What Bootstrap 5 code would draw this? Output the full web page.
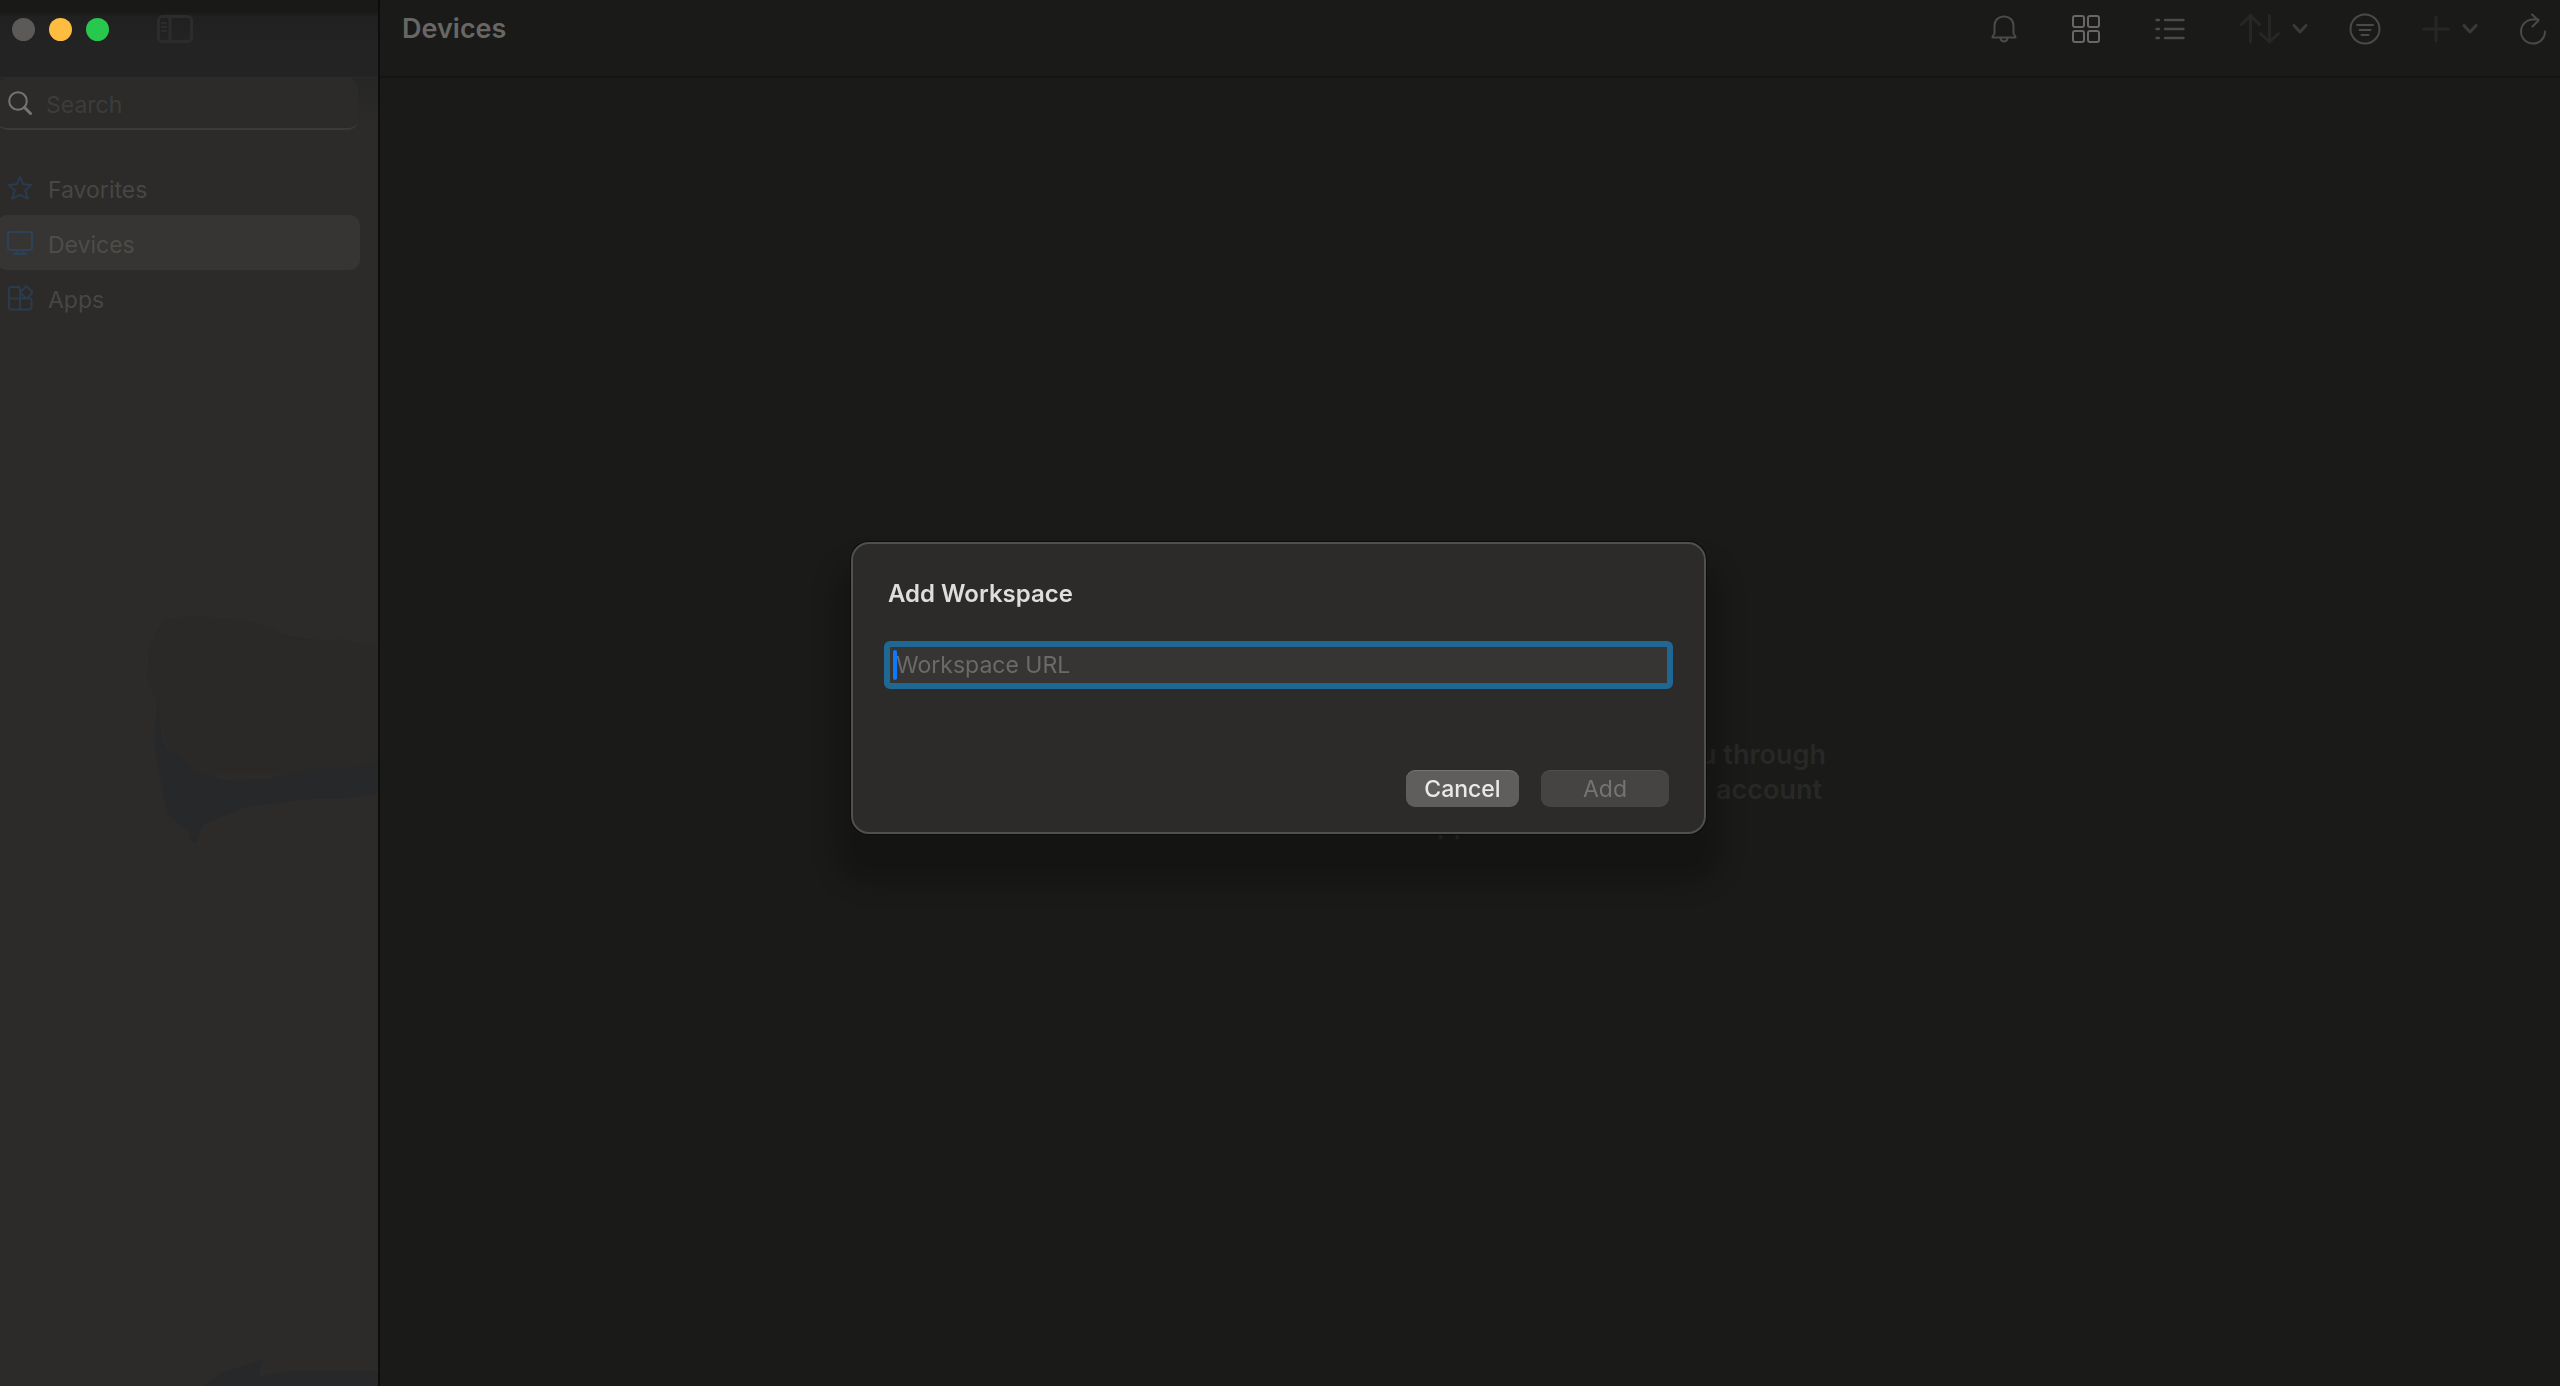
<!DOCTYPE html>
<html lang="en" data-bs-theme="dark">
<head>
<meta charset="utf-8">
<meta name="viewport" content="width=device-width, initial-scale=1">
<title>Devices</title>
<link href="https://cdn.jsdelivr.net/npm/bootstrap@5.3.0/dist/css/bootstrap.min.css" rel="stylesheet">
<style>
  body { font-family: Inter, "Liberation Sans", sans-serif; font-size: 23px; line-height: 32px; background: #1a1a18; color: #4b4a48; }
  svg { display: block; fill: none; stroke: currentColor; stroke-width: 2; stroke-linecap: round; stroke-linejoin: round; flex: none; }
  svg.thick { stroke-width: 3; }
  .side { width: 380px; border-right: 2px solid #0d0d0c; background: #2c2b29; }
  .side-art { left: 0; bottom: 0; height: 100%; width: 378px; stroke: none; }
  .side-top { height: 77px; padding: 0 24px 19px 12px; background: linear-gradient(#191917 0 12px, #202020 16px, #232323 40px); }
  .side-search { background: linear-gradient(#262626, #2c2b29 50px); padding-bottom: 30px; }
  .lights { gap: 14px; }
  .light { width: 23px; height: 23px; border-radius: 50%; border: 0; padding: 0; }
  .light-close { background: #5b5a58; } .light-min { background: #febc40; } .light-max { background: #27c84d; }
  .ico-btn { border: 0; padding: 0; background: none; color: #4b4a48; display: flex; align-items: center; gap: 12px; }
  .ico-btn.faint { color: #272727; }
  .ico-btn.toggle { color: #2c2c2c; }
  .ico-btn.strong { color: #686765; }
  .chev { color: #3b3a39; }
  .tools { gap: 41px; }
  .tools .wide { margin-left: 14px; }
  .search-box { width: 361px; height: 52px; margin: 1px 0 0 -3px; padding-left: 11px; gap: 14px; border-radius: 10px; background: #2c2b29; border-bottom: 2px solid #3b3a39; color: #757472; }
  .search-box input { border: 0; background: none; outline: 0; padding: 3px 0 0; min-width: 0; flex: 1; }
  .search-box input::placeholder { color: #3d3c3c; opacity: 1; }
  .side-link { width: 363px; height: 55px; margin-left: -3px; padding-left: 11px; gap: 16px; border-radius: 10px; color: #474644; text-decoration: none; }
  .side-link span { padding-top: 4px; }
  .side-link svg { color: #2a3b4e; }
  .side-link.active { background: #363533; color: #4d4c4a; }
  .side-link.active svg { color: #2d4158; }
  .top-bar { height: 78px; padding: 0 13px 18px 22px; border-bottom: 2px solid #141412; }
  .top-bar h1 { font-size: 27px; line-height: 32px; font-weight: 600; color: #686765; }
  .notice { width: 712px; font-size: 27px; line-height: 35px; font-weight: 600; color: #282827; padding-top: 114px; }
  .sheet { --bs-modal-width: 855px; --bs-modal-margin: 0; padding: 0 3px 10px 0; }
  .sheet .modal-content { background: #2c2b29; border: 2px solid #50504e; border-radius: 18px; box-shadow: 0 0 0 1px #0c0c0b, 0 34px 24px 16px rgba(0,0,0,.22); padding: 32px 31px 25px; }
  .sheet h2 { font-size: 24px; line-height: 36px; font-weight: 600; color: #dededd; padding-left: 4px; margin-bottom: 29px; }
  .url { height: 48px; border: 6px solid #1f6893; border-radius: 6px; background: #363533; color: #dededd; font-size: 23px; line-height: 32px; padding: 0 6px; }
  .url:focus { border-color: #1f6893; background: #363533; box-shadow: none; }
  .url::placeholder { color: #6b6a68; opacity: 1; }
  .caret { left: 9px; top: 9px; width: 4px; height: 30px; border-radius: 2px; background: #0a7aff; }
  .actions { gap: 22px; padding-top: 33px; }
  .act { --bs-btn-font-size: 23px; --bs-btn-line-height: 32px; --bs-btn-padding-y: 0; --bs-btn-padding-x: 0; --bs-btn-border-width: 0; --bs-btn-border-radius: 9px; height: 37px; box-shadow: inset 0 1px 0 #ffffff24; }
  .act-cancel { --bs-btn-color: #e9e9e8; --bs-btn-bg: #5f5e5c; --bs-btn-hover-bg: #6a6967; --bs-btn-hover-color: #fff; width: 113px; font-weight: 500; }
  .act-add { --bs-btn-disabled-color: #757472; --bs-btn-disabled-bg: #454442; --bs-btn-disabled-opacity: 1; width: 128px; box-shadow: inset 0 1px 0 #ffffff10; }
</style>
<script src="https://cdn.jsdelivr.net/npm/bootstrap@5.3.0/dist/js/bootstrap.bundle.min.js"></script>
</head>
<body>
<div class="d-flex vh-100 overflow-hidden">
  <aside class="side position-relative flex-shrink-0 overflow-hidden">
    <!-- wallpaper tint showing through the sidebar -->
    <svg class="side-art position-absolute" viewBox="0 0 378 1386" preserveAspectRatio="xMinYMax slice" aria-hidden="true">
      <path fill="#2a2927" d="M165 619Q180 617 196 616L248 621Q265 626 285 635Q310 642 340 639Q360 645 378 645V775H180L158 720L157 702L147 678L149 650Q155 630 165 619Z"/>
      <path fill="#27282a" d="M157 702L162 738L168 750L181 758L194 772L225 780L265 779L310 770L350 768L378 763V793L340 799L310 799L250 806Q225 814 202 826L196 843L190 840L188 831L168 815L164 800L154 740ZM280 634L315 640L300 640ZM205 1386L220 1373L262 1360L259 1377L290 1371H378V1386Z"/>
    </svg>
    <div class="side-top position-relative d-flex align-items-center">
      <div class="lights d-flex">
        <button class="light light-close" aria-label="Close"></button>
        <button class="light light-min" aria-label="Minimize"></button>
        <button class="light light-max" aria-label="Zoom"></button>
      </div>
      <button class="ico-btn toggle ms-5" aria-label="Toggle sidebar">
        <svg class="thick" width="36" height="28" viewBox="0 0 36 28"><rect x="1.5" y="1.5" width="33" height="25" rx="4"/><path d="M13 2V26"/><path stroke-width="2" d="M5 8H9M5 12H9M5 16H9"/></svg>
      </button>
    </div>
    <div class="side-search position-relative">
      <div class="search-box d-flex align-items-center">
        <svg width="24" height="24" viewBox="0 0 24 24"><circle cx="10" cy="10" r="8.8"/><path d="M16.5 16.5L22.5 22.5" stroke-width="3"/></svg>
        <input type="search" placeholder="Search" aria-label="Search">
      </div>
    </div>
    <nav class="position-relative">
      <a href="#" class="side-link d-flex align-items-center">
        <svg width="24" height="24" viewBox="0 0 24 24"><path d="M12 1L15.2 8.2L23 9L17.2 14.2L19.8 22.6L12 18.8L4.200 22.6L6.800 14.2L1 9L8.800 8.200Z"/></svg>
        <span>Favorites</span></a>
      <a href="#" class="side-link active d-flex align-items-center" aria-current="page">
        <svg width="24" height="24" viewBox="0 0 24 24" overflow="visible"><rect x="0" y="1" width="24" height="18" rx="2"/><path d="M9.500 19.500V22M14.500 19.500V22M6 23H18"/></svg>
        <span>Devices</span></a>
      <a href="#" class="side-link d-flex align-items-center">
        <svg width="24" height="24" viewBox="0 0 24 24" overflow="visible"><path d="M12 12.500V3Q12 1 10 1H3Q1 1 1 3V21Q1 23.500 3 23.500H21Q23.500 23.500 23.500 21V14Q23.500 12.500 22 12.500H1M12 12.500V23.500M13 7.200L17.500 12H19.200L24 7.300Q24.600 6.500 24 5.800L19.200 .8Q18.300 0 17.500 .8L13 5.500Q12.300 6.300 13 7.200Z"/></svg>
        <span>Apps</span></a>
    </nav>
  </aside>
  <main class="flex-grow-1 d-flex flex-column">
    <header class="top-bar d-flex align-items-center justify-content-between">
      <h1 class="m-0">Devices</h1>
      <div class="tools d-flex align-items-center">
        <button class="ico-btn" aria-label="Notifications">
          <svg width="26" height="28" viewBox="0 0 26 28"><path d="M1.500 22.500Q1.500 21 3.500 18.500V11C3.500 5 7.500 1.500 13 1.500S22.500 5 22.500 11V18.500Q24.500 21 24.500 22.500ZM9.500 23Q10 26.500 13 26.500T16.500 23"/></svg></button>
        <button class="ico-btn strong wide" aria-label="Grid view">
          <svg width="28" height="28" viewBox="0 0 28 28"><rect x="1" y="1" width="11" height="11" rx="2"/><rect x="16" y="1" width="11" height="11" rx="2"/><rect x="1" y="16" width="11" height="11" rx="2"/><rect x="16" y="16" width="11" height="11" rx="2"/></svg></button>
        <button class="ico-btn wide" aria-label="List view">
          <svg width="30" height="24" viewBox="0 0 30 24"><path stroke-width="2.400" d="M1.500 3H4M10 3H28.500M1.500 12H4M10 12H28.500M1.500 21H4M10 21H28.500"/></svg></button>
        <button class="ico-btn faint wide" aria-label="Sort">
          <svg class="thick" width="40" height="30" viewBox="0 0 40 30"><path d="M10.500 28V1.500M1.500 10.500L10.500 1.500L19.500 10.500M29.500 1.500V28M20.500 19.500L29.500 28L38.500 19.500"/></svg>
          <svg class="chev thick" width="16" height="10" viewBox="0 0 16 10"><path d="M2 1.500L8 8L14 1.500"/></svg></button>
        <button class="ico-btn" aria-label="Filter">
          <svg width="32" height="32" viewBox="0 0 32 32"><circle cx="16" cy="16" r="14.500"/><path d="M8 12H24M10.500 17H21.500M12.500 22H19.500"/></svg></button>
        <button class="ico-btn faint" aria-label="Add">
          <svg class="thick" width="28" height="28" viewBox="0 0 28 28"><path d="M14 2V26M2 14H26"/></svg>
          <svg class="chev thick" width="16" height="10" viewBox="0 0 16 10"><path d="M2 1.500L8 8L14 1.500"/></svg></button>
        <button class="ico-btn" aria-label="Refresh">
          <svg width="28" height="32" viewBox="0 0 28 32"><path d="M26 18.500A12 12 0 1 1 14 6.500H19.500M13 1.500L19.500 7.500L13.500 13.500"/></svg></button>
      </div>
    </header>
    <section class="flex-grow-1 d-flex flex-column align-items-center justify-content-center">
      <div class="notice">
        <div class="text-end">you through</div>
        <div class="text-end pe-1">and account</div>
        <div class="text-center pe-5">app</div>
      </div>
    </section>
  </main>
</div>
<div class="modal d-block sheet" role="dialog" aria-labelledby="sheet-title">
  <div class="modal-dialog modal-dialog-centered h-100">
    <form class="modal-content">
      <h2 id="sheet-title">Add Workspace</h2>
      <div class="position-relative mb-5">
        <input class="form-control url" type="text" placeholder="Workspace URL" aria-label="Workspace URL">
        <span class="caret position-absolute"></span>
      </div>
      <div class="actions d-flex justify-content-end me-1">
        <button type="button" class="btn act act-cancel">Cancel</button>
        <button type="submit" class="btn act act-add" disabled>Add</button>
      </div>
    </form>
  </div>
</div>
</body>
</html>
